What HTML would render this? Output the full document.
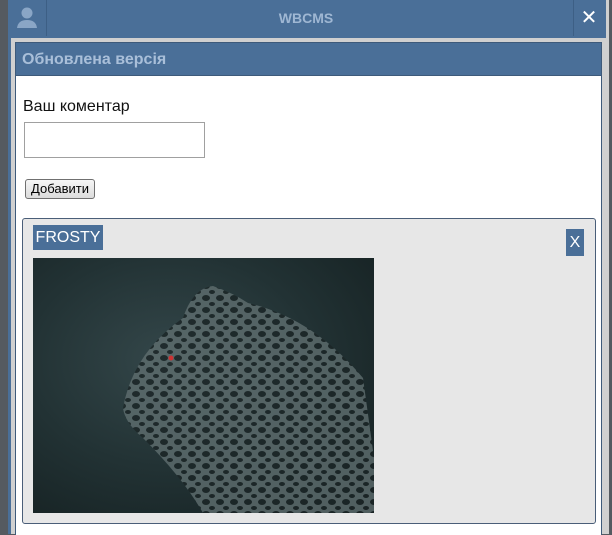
<!DOCTYPE html><html><head><meta charset="utf-8"><style>
body{margin:0;width:612px;height:534px;overflow:hidden;background:#555a60;font-family:"Liberation Sans",sans-serif;position:relative}
.dlg{position:absolute;left:8px;top:0;width:598px;height:534px;background:#d0d0d0;border-left:3px solid #4a6f98}
.top{position:absolute;left:8px;top:0;width:598px;height:38px;background:#4a6f98}
.ico{position:absolute;left:8px;top:0;width:38px;height:36px;border-right:1px solid #3d5f85}
.cls{position:absolute;left:573px;top:0;width:30px;height:36px;border-left:1px solid #3d5f85;color:#fff;font-size:20px;text-align:center;line-height:36px}
.title{position:absolute;left:0;width:612px;top:10px;text-align:center;color:#9fb7d3;font-weight:bold;font-size:14px}
.panel{position:absolute;left:15px;top:42px;width:585px;height:492px;background:#fff;border:1px solid #3e5a7a;border-bottom:none}
.hdr{height:32px;background:#4a6f98;border-bottom:1px solid #3e5a7a;color:#a9bfd9;font-weight:bold;font-size:16px;line-height:33px;padding-left:6px}
</style></head><body>
<div class="dlg"></div>
<div class="top"></div>
<div class="ico"><svg width="38" height="36"><circle cx="19" cy="13" r="5.5" fill="#8aa6c6"/><path d="M9 28 Q10 20 19 20 Q28 20 29 28Z" fill="#8aa6c6"/></svg></div>
<div class="title">WBCMS</div>
<div class="cls">✕</div>
<div class="panel"><div class="hdr">Обновлена версія</div></div>
<div style="position:absolute;left:23px;top:98px;font-size:16px;color:#111">Ваш коментар</div>
<div style="position:absolute;left:24px;top:122px;width:179px;height:34px;border:1px solid #a0a0a0"></div>
<div style="position:absolute;left:25px;top:179px;width:68px;height:18px;border:1px solid #707070;border-radius:3px;background:linear-gradient(#f6f6f6,#dcdcdc);font-size:13px;text-align:center;line-height:18px">Добавити</div>
<div style="position:absolute;left:22px;top:218px;width:572px;height:304px;background:#e7e7e7;border:1px solid #4a5e78;border-radius:3px"></div>
<div style="position:absolute;left:33px;top:225px;width:70px;height:25px;background:#4a6f98;color:#fff;font-size:16px;line-height:26px;text-align:center">FROSTY</div>
<div style="position:absolute;left:566px;top:229px;width:18px;height:27px;background:#4a6f98;color:#fff;font-size:16px;line-height:27px;text-align:center">X</div>
<div style="position:absolute;left:33px;top:258px;width:341px;height:255px;background:radial-gradient(ellipse at 40% 40%,#34474a 0,#223234 50%,#141f20 100%)">
<svg width="341" height="255"><defs><pattern id="s" width="14" height="12" patternUnits="userSpaceOnUse"><rect width="14" height="12" fill="#5f6e6f"/><ellipse cx="5" cy="4" rx="4" ry="3" fill="#1b2526"/><ellipse cx="11" cy="10" rx="3" ry="2" fill="#1b2526"/></pattern></defs>
<path d="M90 150 Q100 95 150 60 Q160 30 180 28 Q200 35 215 45 Q280 60 330 120 L341 200 L341 255 L170 255 Q150 220 110 180 Q92 165 90 150Z" fill="url(#s)" opacity=".8"/><circle cx="138" cy="100" r="2.5" fill="#c33"/></svg></div>
</body></html>
